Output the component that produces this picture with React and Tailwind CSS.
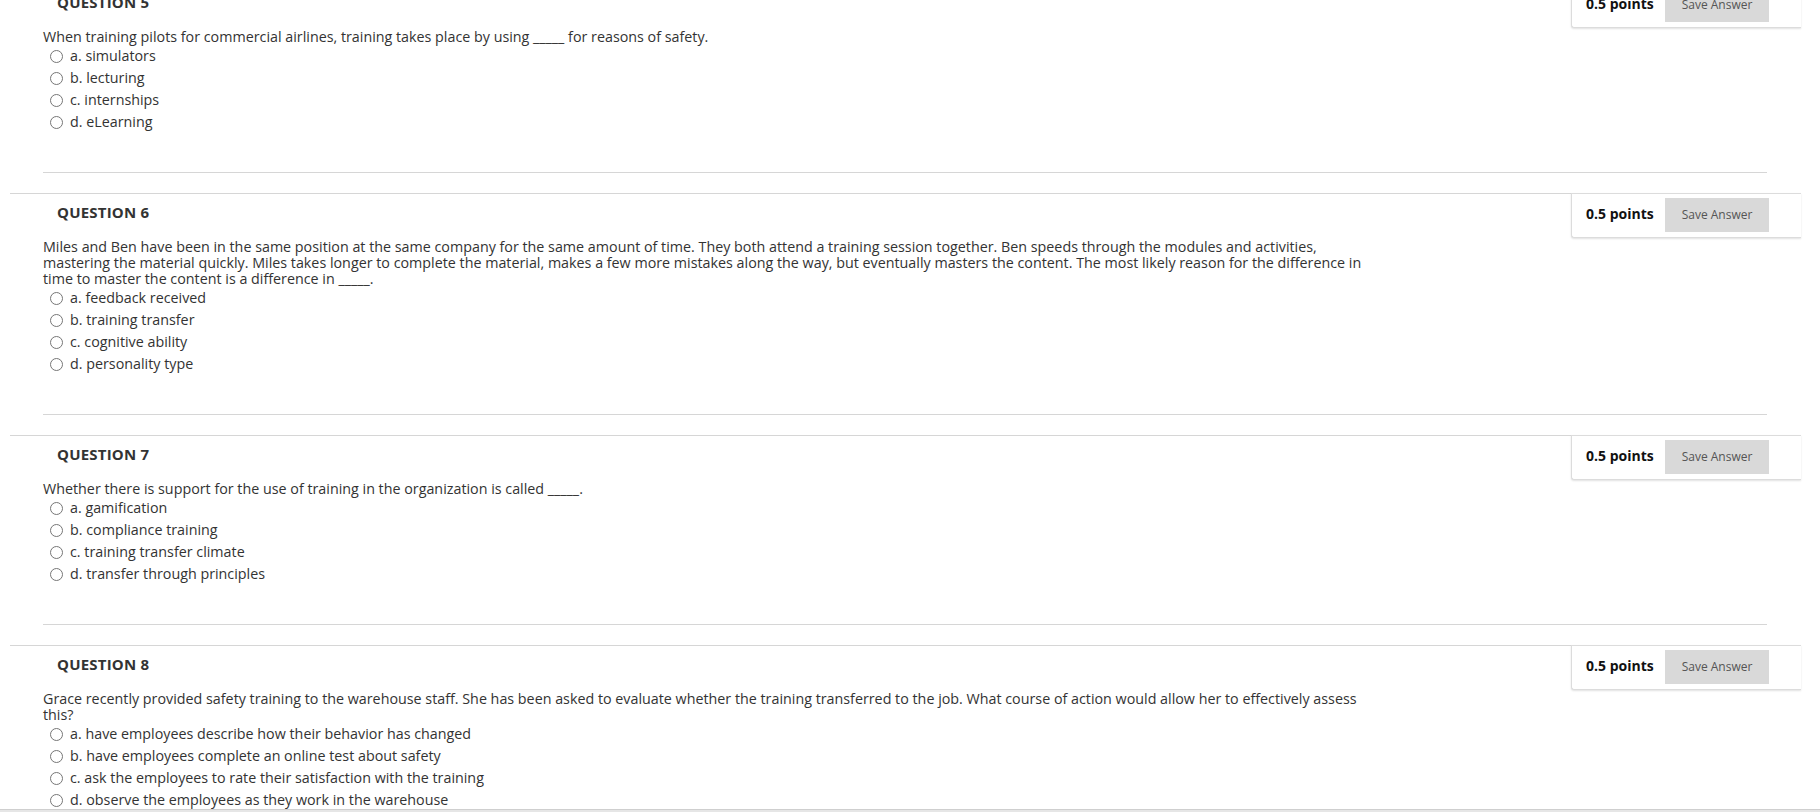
import { useState } from "react"

const questions = [
  {
    number: 5,
    lines: ["When training pilots for commercial airlines, training takes place by using _____ for reasons of safety."],
    options: ["a. simulators", "b. lecturing", "c. internships", "d. eLearning"],
  },
  {
    number: 6,
    lines: [
      "Miles and Ben have been in the same position at the same company for the same amount of time. They both attend a training session together. Ben speeds through the modules and activities,",
      "mastering the material quickly. Miles takes longer to complete the material, makes a few more mistakes along the way, but eventually masters the content. The most likely reason for the difference in",
      "time to master the content is a difference in _____.",
    ],
    options: ["a. feedback received", "b. training transfer", "c. cognitive ability", "d. personality type"],
  },
  {
    number: 7,
    lines: ["Whether there is support for the use of training in the organization is called _____."],
    options: ["a. gamification", "b. compliance training", "c. training transfer climate", "d. transfer through principles"],
  },
  {
    number: 8,
    lines: [
      "Grace recently provided safety training to the warehouse staff. She has been asked to evaluate whether the training transferred to the job. What course of action would allow her to effectively assess",
      "this?",
    ],
    options: [
      "a. have employees describe how their behavior has changed",
      "b. have employees complete an online test about safety",
      "c. ask the employees to rate their satisfaction with the training",
      "d. observe the employees as they work in the warehouse",
    ],
  },
]

const Question = ({ question, selected, onSelect }) => {
  return (
    <div className="border-t border-[#d6d6d6] ml-[10px] w-[1791px]">
      <div className="flex items-start justify-between h-[45px]">
        <h3 className="pl-[47px] pt-[8px] text-[15px] leading-[20px] font-bold text-[#333] tracking-[0.2px]">
          QUESTION {question.number}
        </h3>
        <div className="w-[230px] h-[45px] mt-[-1px] border border-r-0 border-[#dcdcdc] rounded-bl-[3px] shadow-[0_1px_2px_rgba(0,0,0,0.12)] flex items-start pl-[14px] bg-white">
          <span className="mt-[10px] text-[14px] leading-[20px] font-bold text-[#111] w-[79px] whitespace-nowrap">0.5 points</span>
          <button className="mt-[4px] w-[104px] h-[34px] bg-[#d9d9d9] text-[12px] text-[#555]">Save Answer</button>
        </div>
      </div>

      <div className="pl-[33px] text-[14.3px] leading-[16px] text-[#333]">
        {question.lines.map((line, i) => (
          <div key={i} className="whitespace-nowrap">{line}</div>
        ))}
      </div>

      <div className="pl-[33px]">
        {question.options.map((opt, i) => (
          <label
            key={i}
            onClick={() => onSelect(i)}
            className="flex items-center h-[22px] text-[14.3px] text-[#333] cursor-pointer whitespace-nowrap"
          >
            <span className="ml-[7px] mr-[7px] w-[13px] h-[13px] rounded-full border border-[#767676] bg-white flex items-center justify-center">
              {selected === i && <span className="w-[7px] h-[7px] rounded-full bg-[#333]" />}
            </span>
            {opt}
          </label>
        ))}
      </div>

      <div className="mt-[39px] mb-[20px] ml-[33px] w-[1724px] border-t border-[#d6d6d6]" />
    </div>
  )
}

export default function App() {
  const [answers, setAnswers] = useState({})

  return (
    <div className="min-h-screen bg-white overflow-hidden" style={{ fontFamily: '"Open Sans", "Liberation Sans", sans-serif' }}>
      <div className="mt-[-17px]">
        {questions.map((q) => (
          <Question
            key={q.number}
            question={q}
            selected={answers[q.number]}
            onSelect={(i) => setAnswers({ ...answers, [q.number]: i })}
          />
        ))}
      </div>
      <div className="fixed left-0 right-0 bottom-0 h-[3px] bg-[#e6e6e6] border-t border-[#cfcfcf]" />
    </div>
  )
}
